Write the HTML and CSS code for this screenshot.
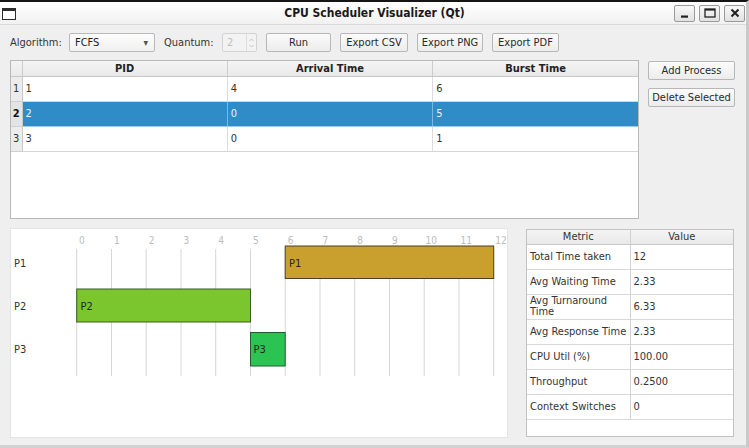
FILE: index.html
```html
<!DOCTYPE html>
<html>
<head>
<meta charset="utf-8">
<title>CPU Scheduler Visualizer (Qt)</title>
<link rel="stylesheet" href="styles.css">
</head>
<body>
<div class="window">
  <div class="titlebar">
    <div class="tb-left"><span class="win-icon"></span></div>
    <div class="tb-title">CPU Scheduler Visualizer (Qt)</div>
    <div class="tb-right">
      <span class="tb-btn">
        <svg width="9" height="9" viewBox="0 0 9 9"><rect x="1" y="6.5" width="7" height="2.2" fill="#222"/></svg>
      </span>
      <span class="tb-btn">
        <svg width="12" height="10" viewBox="0 0 12 10"><rect x="1" y="1" width="10" height="8" fill="none" stroke="#222" stroke-width="1.3"/><rect x="1" y="1" width="10" height="1.6" fill="#222"/></svg>
      </span>
      <span class="tb-btn">
        <svg width="10" height="10" viewBox="0 0 10 10"><path d="M1.5 1.5 L8.5 8.5 M8.5 1.5 L1.5 8.5" stroke="#222" stroke-width="2"/></svg>
      </span>
    </div>
  </div>

  <div class="content">
    <div class="toolbar">
      <span class="lbl lbl-alg">Algorithm:</span>
      <div class="combo"><span>FCFS</span><span class="combo-arrow">▾</span></div>
      <span class="lbl lbl-q">Quantum:</span>
      <div class="spin"><span class="spin-val">2</span>
        <span class="spin-btns">
          <svg width="7" height="14" viewBox="0 0 7 14"><path d="M1.5 5 L3.5 3 L5.5 5" fill="none" stroke="#c4c4c4" stroke-width="1"/><path d="M1.5 9 L3.5 11 L5.5 9" fill="none" stroke="#c4c4c4" stroke-width="1"/></svg>
        </span>
      </div>
      <button class="btn w-run">Run</button>
      <button class="btn w-csv">Export CSV</button>
      <button class="btn w-png">Export PNG</button>
      <button class="btn w-pdf">Export PDF</button>
    </div>

    <div class="row-top">
      <div class="proc-table">
        <table class="grid">
          <thead>
            <tr><th class="corner"></th><th>PID</th><th>Arrival Time</th><th class="last">Burst Time</th></tr>
          </thead>
          <tbody>
            <tr><td class="rh">1</td><td>1</td><td>4</td><td class="last">6</td></tr>
            <tr class="sel"><td class="rh">2</td><td>2</td><td>0</td><td class="last">5</td></tr>
            <tr><td class="rh">3</td><td>3</td><td>0</td><td class="last">1</td></tr>
          </tbody>
        </table>
      </div>
      <div class="side-btns">
        <button class="btn side">Add Process</button>
        <button class="btn side">Delete Selected</button>
      </div>
    </div>

    <div class="row-bottom">
      <div class="gantt">
        <svg width="498" height="210" viewBox="0 0 498 210" class="gantt-svg">
          <g class="gridlines" stroke="#d6d6d6" stroke-width="1">
            <line x1="66.7" y1="21" x2="66.7" y2="148"/>
            <line x1="101.5" y1="21" x2="101.5" y2="148"/>
            <line x1="136.2" y1="21" x2="136.2" y2="148"/>
            <line x1="171" y1="21" x2="171" y2="148"/>
            <line x1="205.7" y1="21" x2="205.7" y2="148"/>
            <line x1="240.5" y1="21" x2="240.5" y2="148"/>
            <line x1="275.2" y1="21" x2="275.2" y2="148"/>
            <line x1="310" y1="21" x2="310" y2="148"/>
            <line x1="344.7" y1="21" x2="344.7" y2="148"/>
            <line x1="379.5" y1="21" x2="379.5" y2="148"/>
            <line x1="414.2" y1="21" x2="414.2" y2="148"/>
            <line x1="449" y1="21" x2="449" y2="148"/>
            <line x1="483.7" y1="21" x2="483.7" y2="148"/>
          </g>
          <g class="ticks">
            <text x="69" y="16">0</text>
            <text x="104" y="16">1</text>
            <text x="138.7" y="16">2</text>
            <text x="173.5" y="16">3</text>
            <text x="208.2" y="16">4</text>
            <text x="243" y="16">5</text>
            <text x="277.7" y="16">6</text>
            <text x="312.5" y="16">7</text>
            <text x="347.2" y="16">8</text>
            <text x="382" y="16">9</text>
            <text x="415.5" y="16">10</text>
            <text x="450.5" y="16">11</text>
            <text x="485.2" y="16">12</text>
          </g>
          <g class="rowlbl">
            <text x="4" y="39">P1</text>
            <text x="4" y="82">P2</text>
            <text x="4" y="125">P3</text>
          </g>
          <rect x="275.2" y="18" width="208.5" height="32.5" fill="#c9a02e" stroke="#4a4024" stroke-width="1"/>
          <rect x="66.7" y="61" width="173.8" height="33" fill="#7bc52e" stroke="#3f5a22" stroke-width="1"/>
          <rect x="240.5" y="104.5" width="34.7" height="33.5" fill="#2bc352" stroke="#235a31" stroke-width="1"/>
          <g class="barlbl">
            <text x="279" y="39">P1</text>
            <text x="70.5" y="82">P2</text>
            <text x="243.5" y="125">P3</text>
          </g>
        </svg>
      </div>
      <div class="metrics">
        <table class="mt">
          <thead><tr><th class="c1">Metric</th><th>Value</th></tr></thead>
          <tbody>
            <tr><td class="c1">Total Time taken</td><td>12</td></tr>
            <tr><td class="c1">Avg Waiting Time</td><td>2.33</td></tr>
            <tr><td class="c1 wrap">Avg Turnaround Time</td><td>6.33</td></tr>
            <tr><td class="c1">Avg Response Time</td><td>2.33</td></tr>
            <tr><td class="c1">CPU Util (%)</td><td>100.00</td></tr>
            <tr><td class="c1">Throughput</td><td>0.2500</td></tr>
            <tr><td class="c1">Context Switches</td><td>0</td></tr>
          </tbody>
        </table>
      </div>
    </div>
  </div>
</div>
</body>
</html>
```
FILE: styles.css
```css
* { box-sizing: border-box; }
html, body { margin: 0; padding: 0; }
body {
  width: 749px;
  height: 448px;
  overflow: hidden;
  font-family: "DejaVu Sans", "Liberation Sans", sans-serif;
  font-stretch: semi-condensed;
  font-size: 11px;
  color: #333;
  background: #efefef;
}
.window {
  width: 749px;
  height: 448px;
  display: flex;
  flex-direction: column;
  border-top: 2px solid #151515;
  border-right: 3px solid #c9c9c9;
  border-bottom: 3px solid #d2d2d2;
  background: #efefef;
}
.titlebar {
  height: 23px;
  flex: none;
  display: grid;
  grid-template-columns: 1fr auto 1fr;
  align-items: center;
  background: linear-gradient(#ffffff, #f1f1f1);
  border-bottom: 1px solid #dadada;
}
.tb-left { display: flex; align-items: center; padding-left: 2px; }
.win-icon {
  width: 14px;
  height: 12px;
  border: 1.5px solid #2a2a2a;
  border-top-width: 3px;
  background: #fff;
  margin-top: 1px;
}
.tb-title {
  font-weight: bold;
  font-size: 12px;
  color: #1a1a1a;
  padding-left: 3px;
}
.tb-right { display: flex; justify-content: flex-end; gap: 4px; padding-right: 1px; }
.tb-btn {
  width: 21px;
  height: 17px;
  display: flex;
  align-items: center;
  justify-content: center;
  border: 1px solid #9a9a9a;
  border-radius: 2px;
  background: linear-gradient(#f8f8f8, #e2e2e2);
}
.content {
  flex: 1;
  display: flex;
  flex-direction: column;
  padding: 8px 11px 0 10px;
}
.toolbar {
  display: flex;
  align-items: center;
  gap: 9px;
  height: 19px;
}
.lbl { color: #333; }
.lbl-alg { width: 50px; }
.lbl-q { width: 49px; }
.combo {
  width: 86px;
  height: 19px;
  display: flex;
  align-items: center;
  justify-content: space-between;
  padding: 0 6px 0 5px;
  border: 1px solid #b9b9b9;
  border-radius: 2px;
  background: linear-gradient(#fdfdfd, #f1f1f1);
  color: #222;
}
.combo-arrow { font-size: 10px; color: #555; }
.spin {
  width: 35px;
  height: 19px;
  display: flex;
  align-items: center;
  justify-content: space-between;
  border: 1px solid #d3d3d3;
  border-radius: 2px;
  background: #f3f3f3;
  padding-left: 4px;
}
.spin-val { color: #bdbdbd; }
.spin-btns {
  width: 10px;
  height: 17px;
  display: flex;
  align-items: center;
  justify-content: center;
  border-left: 1px solid #dedede;
}
.btn {
  font-family: inherit;
  font-stretch: inherit;
  font-size: 11px;
  color: #2a2a2a;
  height: 19px;
  padding: 0;
  border: 1px solid #b7b7b7;
  border-radius: 2px;
  background: linear-gradient(#fbfbfb, #ececec);
}
.w-run { width: 65px; }
.w-csv { width: 68px; }
.w-png { width: 66px; }
.w-pdf { width: 67px; }

.row-top {
  display: flex;
  gap: 9px;
  margin-top: 8px;
  height: 159px;
}
.proc-table {
  width: 629px;
  flex: none;
  height: 159px;
  border: 1px solid #b8b8b8;
  background: #fff;
  overflow: hidden;
}
.grid {
  width: 100%;
  border-collapse: collapse;
  table-layout: fixed;
}
.grid th {
  height: 15px;
  padding: 0;
  font-weight: bold;
  color: #222;
  background: linear-gradient(#f4f4f4, #e9e9e9);
  border-right: 1px solid #cdcdcd;
  border-bottom: 1px solid #c6c6c6;
}
.grid th.corner { width: 11px; }
.grid th.last, .grid td.last { border-right: none; }
.grid td {
  height: 25px;
  padding: 0 0 0 3px;
  border-right: 1px solid #dcdcdc;
  border-bottom: 1px solid #d6d6d6;
  color: #333;
  vertical-align: middle;
}
.grid td.rh {
  padding: 0;
  text-align: center;
  background: #ececec;
  border-right: 1px solid #c8c8c8;
  border-bottom: 1px solid #d0d0d0;
  color: #333;
}
.grid tr.sel td {
  background: #308cc6;
  color: #e4f2ff;
  border-right-color: #7ab8e0;
  border-bottom-color: #9dcbe8;
}
.grid tr.sel td.rh {
  background: #e4e4e4;
  color: #111;
  font-weight: bold;
  border-right-color: #c8c8c8;
  border-bottom-color: #d0d0d0;
}
.side-btns {
  display: flex;
  flex-direction: column;
  gap: 8px;
  padding-top: 1px;
}
.btn.side { width: 87px; height: 19px; }

.row-bottom {
  display: flex;
  gap: 18px;
  margin-top: 9px;
}
.gantt {
  width: 498px;
  flex: none;
  height: 210px;
  background: #fff;
  border: 1px solid #e4e4e4;
  overflow: hidden;
}
.gantt-svg { display: block; margin: -1px 0 0 -1px; }
.ticks text { font-size: 10px; fill: #bcbcbc; }
.rowlbl text { font-size: 11px; fill: #333; }
.barlbl text { font-size: 11px; fill: #262626; }
.metrics {
  width: 208px;
  flex: none;
  height: 208px;
  margin-top: 1px;
  background: #fff;
  border: 1px solid #c2c2c2;
  overflow: hidden;
}
.mt {
  width: 100%;
  border-collapse: collapse;
  table-layout: fixed;
}
.mt th {
  height: 14px;
  padding: 0;
  font-weight: normal;
  color: #333;
  background: linear-gradient(#f4f4f4, #e9e9e9);
  border-bottom: 1px solid #c8c8c8;
}
.mt th.c1, .mt td.c1 { width: 103px; border-right: 1px solid #d0d0d0; }
.mt td {
  height: 25px;
  padding: 0 0 0 3px;
  border-bottom: 1px solid #d8d8d8;
  color: #333;
  vertical-align: middle;
}
.mt td.wrap { line-height: 11px; padding-bottom: 1px; }
```
